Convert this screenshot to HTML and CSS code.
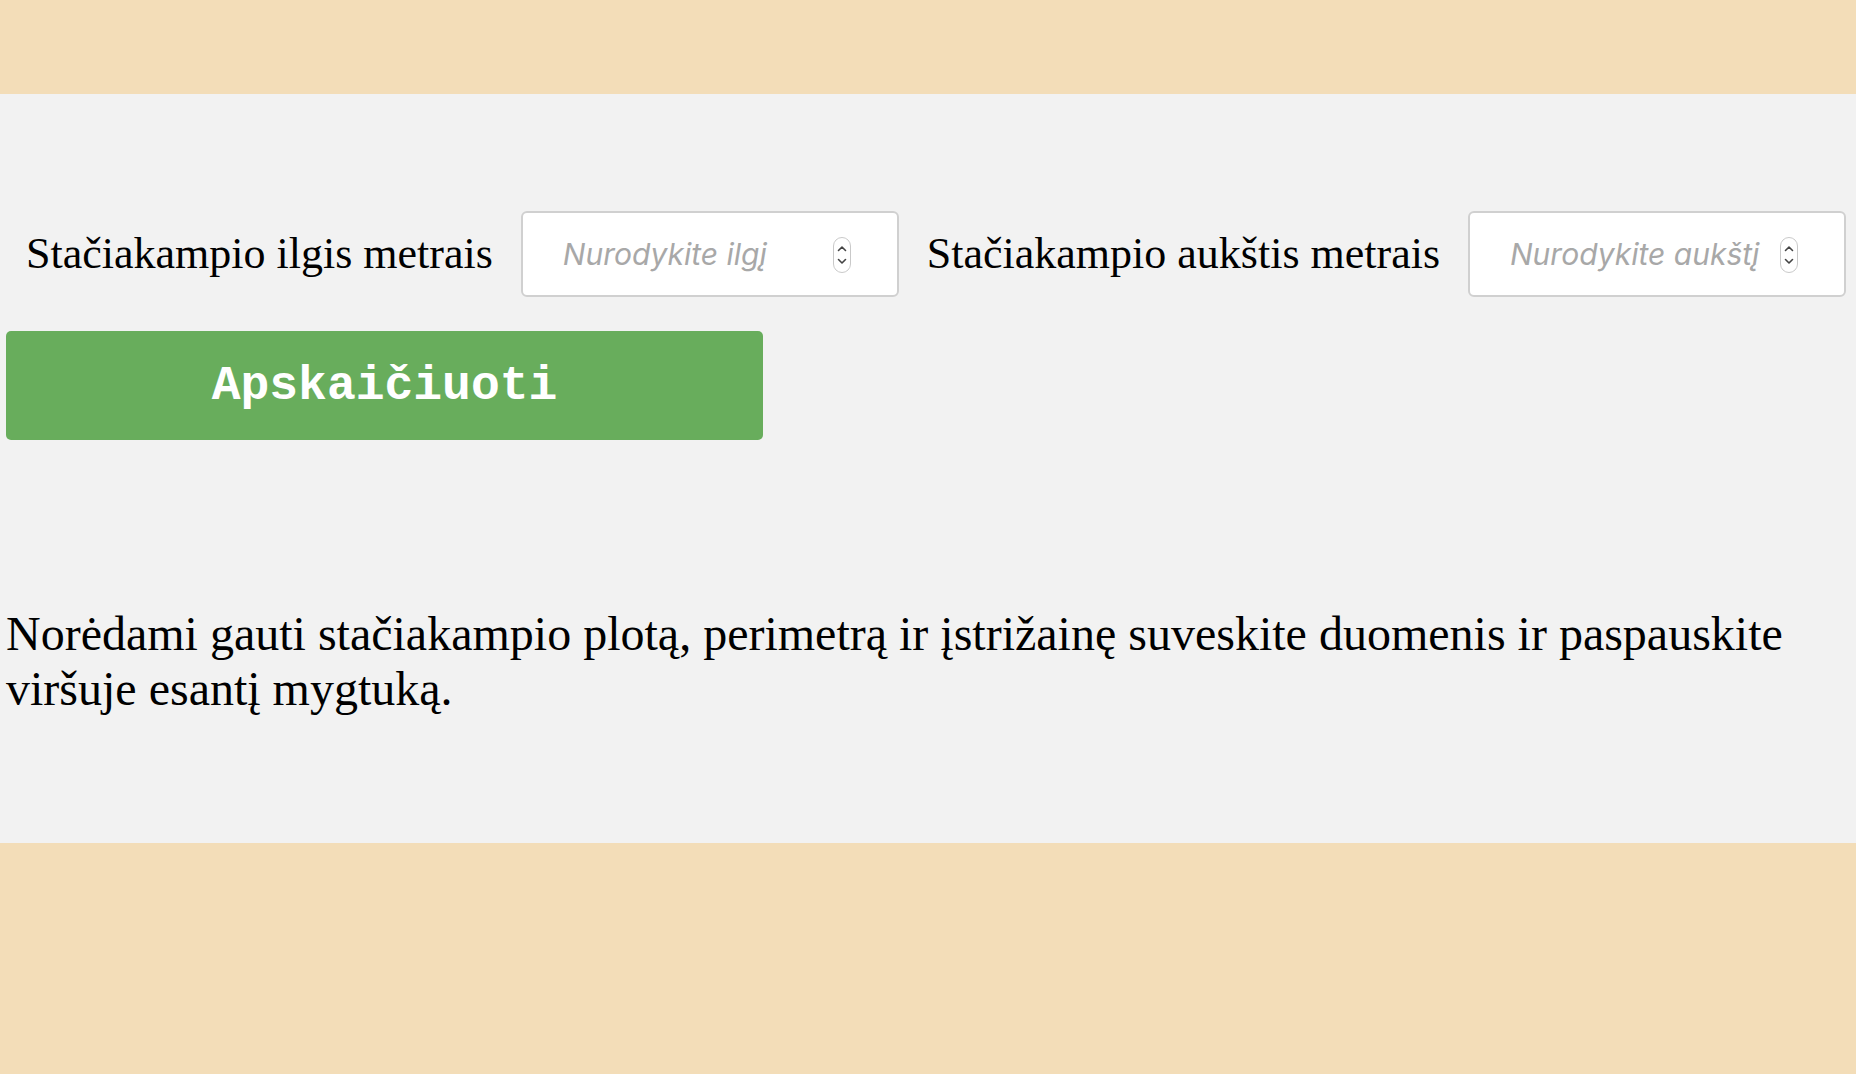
FILE: index.html
```html
<!DOCTYPE html>
<html lang="lt">
<head>
<meta charset="utf-8">
<title>Stačiakampio skaičiuoklė</title>
<link rel="stylesheet" href="styles.css">
</head>
<body>
<header class="top-band"></header>
<main class="panel">
  <form class="calc-form" onsubmit="return false;">
    <div class="field-row">
      <label class="field-label" for="ilgis">Stačiakampio ilgis metrais</label>
      <div class="num-box">
        <input class="num-input" id="ilgis" type="number" placeholder="Nurodykite ilgį">
        <svg class="spinner" width="18" height="36" viewBox="0 0 18 36" aria-hidden="true">
          <rect x="0.5" y="0.5" width="17" height="35" rx="8.5" fill="#fff" stroke="#c9c9c9"/>
          <path d="M5.5 13.5 L9 10 L12.5 13.5" fill="none" stroke="#444" stroke-width="1.6" stroke-linecap="round" stroke-linejoin="round"/>
          <path d="M5.5 22.5 L9 26 L12.5 22.5" fill="none" stroke="#444" stroke-width="1.6" stroke-linecap="round" stroke-linejoin="round"/>
        </svg>
      </div>
      <label class="field-label" for="aukstis">Stačiakampio aukštis metrais</label>
      <div class="num-box">
        <input class="num-input" id="aukstis" type="number" placeholder="Nurodykite aukštį">
        <svg class="spinner" width="18" height="36" viewBox="0 0 18 36" aria-hidden="true">
          <rect x="0.5" y="0.5" width="17" height="35" rx="8.5" fill="#fff" stroke="#c9c9c9"/>
          <path d="M5.5 13.5 L9 10 L12.5 13.5" fill="none" stroke="#444" stroke-width="1.6" stroke-linecap="round" stroke-linejoin="round"/>
          <path d="M5.5 22.5 L9 26 L12.5 22.5" fill="none" stroke="#444" stroke-width="1.6" stroke-linecap="round" stroke-linejoin="round"/>
        </svg>
      </div>
    </div>
    <button class="calc-btn" type="submit">Apskaičiuoti</button>
  </form>
  <p class="hint">Norėdami gauti stačiakampio plotą, perimetrą ir įstrižainę suveskite duomenis ir paspauskite viršuje esantį mygtuką.</p>
</main>
<footer class="bottom-band"></footer>
</body>
</html>
```

FILE: styles.css
```css
html, body {
  margin: 0;
  padding: 0;
}

body {
  background: #f3ddb8;
  font-family: "Liberation Serif", "Times New Roman", serif;
  color: #000;
  min-height: 1074px;
}

.top-band {
  height: 94px;
}

.panel {
  background: #f2f2f2;
  height: 749px;
  box-sizing: border-box;
  padding: 117px 0 0 6px;
}

.calc-form {
  display: flex;
  flex-direction: column;
  align-items: flex-start;
}

.field-row {
  display: flex;
  align-items: center;
  gap: 28px;
  padding-left: 20px;
  height: 86px;
}

.field-label {
  font-size: 44px;
  white-space: nowrap;
  position: relative;
  top: -1px;
}

.num-box {
  display: flex;
  align-items: center;
  box-sizing: border-box;
  width: 378px;
  height: 86px;
  padding: 0 46px 0 40px;
  background: #fff;
  border: 2px solid #d0d0d0;
  border-radius: 6px;
}

.num-input {
  flex: 1;
  min-width: 0;
  border: 0;
  outline: 0;
  padding: 0;
  margin: 0;
  background: transparent;
  font-family: Inter, "Liberation Sans", sans-serif;
  font-style: italic;
  font-size: 30px;
  color: #333;
  -moz-appearance: textfield;
  appearance: textfield;
}

.num-input::placeholder {
  color: #a8a8a8;
  opacity: 1;
}

.num-input::-webkit-inner-spin-button,
.num-input::-webkit-outer-spin-button {
  -webkit-appearance: none;
  margin: 0;
}

.spinner {
  flex: none;
  display: block;
  margin-top: 2px;
}

.calc-btn {
  margin-top: 34px;
  width: 757px;
  height: 109px;
  border: 0;
  border-radius: 5px;
  background: #68ad5c;
  color: #fff;
  font-family: "Liberation Mono", "Courier New", monospace;
  font-weight: bold;
  font-size: 48px;
  cursor: pointer;
  padding: 0;
}

.hint {
  margin: 166px 0 0 0;
  font-size: 48px;
  line-height: 55px;
  padding-right: 60px;
}

.bottom-band {
  height: 231px;
}
```
